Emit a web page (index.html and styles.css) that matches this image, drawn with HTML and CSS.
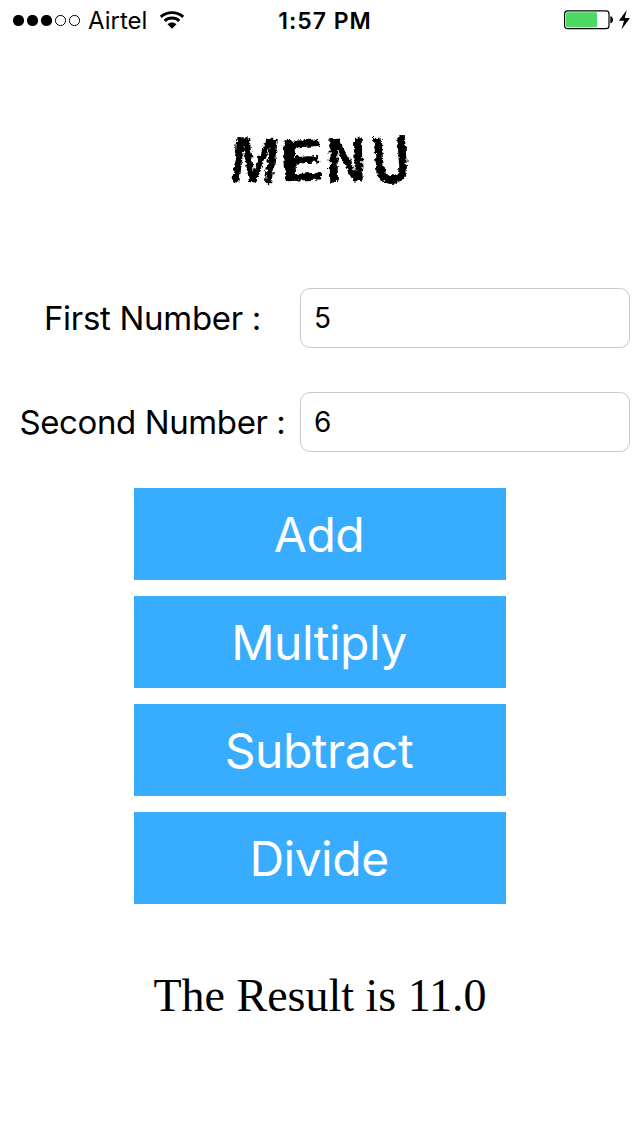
FILE: index.html
```html
<!DOCTYPE html>
<html lang="en">
<head>
<meta charset="utf-8">
<title>Menu</title>
<link rel="stylesheet" href="styles.css">
</head>
<body>
<header class="status">
  <div class="status-left">
    <svg class="signal" width="68" height="12" viewBox="0 0 68 12">
      <circle cx="5.5" cy="5.5" r="5.6"/><circle cx="19.5" cy="5.5" r="5.6"/><circle cx="33.5" cy="5.5" r="5.6"/>
      <circle class="hollow" cx="47.5" cy="5.5" r="5.1"/><circle class="hollow" cx="61.5" cy="5.5" r="5.1"/>
    </svg>
    <span class="carrier">Airtel</span>
    <svg class="wifi" width="26" height="18" viewBox="0 0 26 18">
      <path class="arc" d="M1.8 5.9C8 .2 18 .2 24.2 5.9"/>
      <path class="arc" d="M5.7 9.9C9.8 6.1 16.2 6.1 20.3 9.9"/>
      <path d="M8.5 13.3C11.2 11 14.8 11 17.5 13.3L13 17.8Z"/>
    </svg>
  </div>
  <time class="clock">1:57 PM</time>
  <div class="status-right">
    <svg width="68" height="22" viewBox="0 0 68 22">
      <rect class="shell" x=".6" y=".9" width="44.4" height="17.8" rx="3"/>
      <rect class="charge" x="2" y="2.3" width="31" height="15" rx="1.2"/>
      <path d="M46.3 6.3C50 6.6 50 13 46.3 13.3Z"/>
      <path d="M62.8 0 54.8 10.8H60L57.5 19.5 66 7.9H60.8Z"/>
    </svg>
  </div>
</header>
<main>
  <h1 class="title"><span class="m">M</span><span class="e">E</span><span class="n">N</span><span class="u">U</span></h1>
  <form class="fields">
    <label class="label" for="first"><span class="first-label">First Number :</span></label>
    <input class="input" id="first" value="5">
    <label class="label" for="second"><span class="second-label">Second Number :</span></label>
    <input class="input" id="second" value="6">
  </form>
  <div class="actions">
    <button class="action add">Add</button>
    <button class="action multiply">Multiply</button>
    <button class="action subtract">Subtract</button>
    <button class="action divide">Divide</button>
  </div>
  <p class="result">The Result is 11.0</p>
</main>
<svg class="defs" width="0" height="0">
  <filter id="chalk" x="-10%" y="-20%" width="120%" height="140%">
    <feTurbulence type="fractalNoise" baseFrequency=".24" numOctaves="3" seed="8" result="noise"/>
    <feDisplacementMap in="SourceGraphic" in2="noise" scale="6" xChannelSelector="R" yChannelSelector="G" result="rough"/>
    <feGaussianBlur in="rough" stdDeviation=".4"/>
  </filter>
</svg>
</body>
</html>
```
FILE: styles.css
```css
* { box-sizing: border-box; }
body { margin: 0; background: #fff; color: #000; font-family: Inter, "Liberation Sans", sans-serif; }
.status { display: grid; grid-template-columns: 1fr auto 1fr; align-items: center; height: 40px; padding: 1px 8px 0 13px; }
.status-left { display: flex; align-items: center; }
.status-right { display: flex; justify-content: flex-end; }
.status svg { display: block; }
.hollow { fill: none; stroke: #000; stroke-width: 1; }
.carrier { margin-left: 7px; font-size: 24px; line-height: 39px; letter-spacing: 0; }
.wifi { margin: 0 0 1px 12px; }
.arc { fill: none; stroke: #000; stroke-width: 2.9; }
.clock { padding: 2px 0 0 5px; font-size: 23px; font-weight: 600; line-height: 37px; letter-spacing: 1px; }
.shell { fill: none; stroke: #000; stroke-width: 1.2; }
.charge { fill: #4cd964; }
.title { display: flex; justify-content: center; gap: 6px; height: 60px; margin: 90px 0 98px; padding-left: 6px; font-size: 60px; font-weight: 700; line-height: 60px; filter: url(#chalk); }
.title span { display: flex; justify-content: center; width: 40px; }
.title .m { transform: translateX(1px) rotate(3deg) skewX(-4deg) scale(.84, 1.02); }
.title .e { transform: translateX(2px) rotate(-3deg) scale(1.22, .92); }
.title .n { transform: rotate(-3deg) skewX(-2deg) scaleX(.86); }
.title .u { transform: translateX(-1px) rotate(-4deg) scale(.86, 1.06); }
.fields { display: grid; grid-template-columns: 290px 330px; grid-auto-rows: 60px; gap: 44px 10px; margin: 0; }
.label { display: flex; align-items: center; justify-content: center; padding-left: 15px; font-size: 33px; white-space: nowrap; }
.first-label { letter-spacing: -.3px; }
.second-label { letter-spacing: -.4px; }
.input { width: 330px; height: 60px; padding: 0 13px; border: 1px solid #c8c8c8; border-radius: 10px; background: #fff; color: #000; font: 28px Inter, "Liberation Sans", sans-serif; outline: none; }
.actions { display: grid; grid-auto-rows: 92px; gap: 16px; width: 372px; margin: 36px auto 0; }
.action { border: 0; padding: 2px 2px 0 0; background: #38acff; color: #fff; font: 48px/90px Inter, "Liberation Sans", sans-serif; letter-spacing: -.5px; }
.result { margin: 64.5px 0 0; font: 46px/54px "Liberation Serif", serif; text-align: center; white-space: nowrap; }
.defs { display: block; }
```
